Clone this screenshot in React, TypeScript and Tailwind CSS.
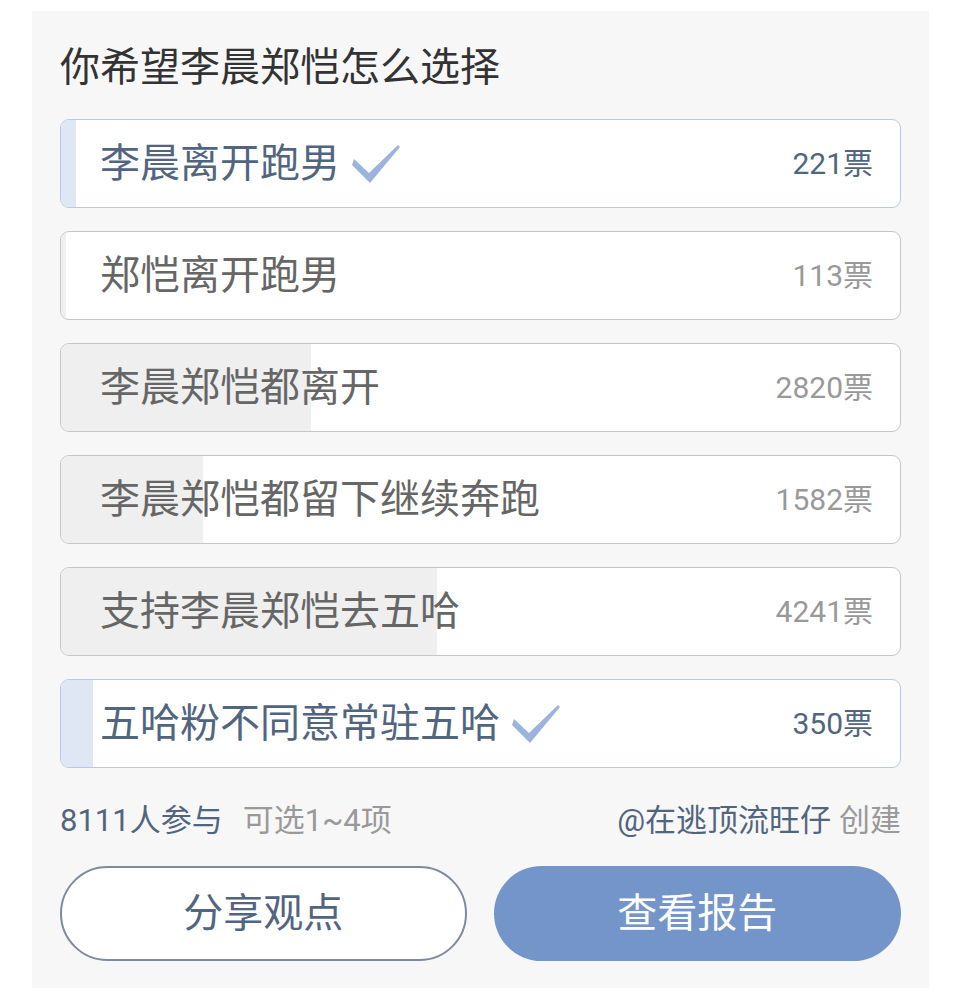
import React from "react";

type Opt = { text: string; votes: number; pct: number; selected: boolean };

const options: Opt[] = [
  { text: "李晨离开跑男", votes: 221, pct: 1.8, selected: true },
  { text: "郑恺离开跑男", votes: 113, pct: 0.6, selected: false },
  { text: "李晨郑恺都离开", votes: 2820, pct: 29.8, selected: false },
  { text: "李晨郑恺都留下继续奔跑", votes: 1582, pct: 16.9, selected: false },
  { text: "支持李晨郑恺去五哈", votes: 4241, pct: 44.8, selected: false },
  { text: "五哈粉不同意常驻五哈", votes: 350, pct: 3.8, selected: true },
];

function Check() {
  return (
    <svg width="48" height="40" viewBox="0 0 48 40" className="ml-[12px] shrink-0">
      <path d="M2 15 L17 29 L46 1 L48 3 L18 39 L0 21 Z" fill="#9bb3dd" />
    </svg>
  );
}

export default function App() {
  return (
    <div
      className="bg-white min-h-[992px] pt-[11px]"
      style={{ fontFamily: 'Roboto, "Noto Sans CJK SC", sans-serif' }}
    >
      <div className="ml-[32px] w-[897px] h-[977px] bg-[#f7f7f7] px-[28px] pt-[37px]">
        <div className="text-[40px] leading-[40px] text-[#333333] mb-[31px]">
          你希望李晨郑恺怎么选择
        </div>
        <div className="flex flex-col gap-[23px]">
          {options.map((o, i) => (
            <div
              key={i}
              className={
                "relative h-[89px] rounded-[9px] border overflow-hidden bg-white " +
                (o.selected ? "border-[#b9c9e3]" : "border-[#c6c6c6]")
              }
            >
              <div
                className={
                  "absolute inset-y-0 left-0 " +
                  (o.selected ? "bg-[#dfe7f4]" : "bg-[#efefef]")
                }
                style={{ width: `${o.pct}%` }}
              />
              <div className="relative h-full flex items-center pl-[39px] pr-[27px]">
                <span
                  className={
                    "text-[40px] leading-none whitespace-nowrap " +
                    (o.selected ? "text-[#52657f]" : "text-[#666666]")
                  }
                >
                  {o.text}
                </span>
                {o.selected && <Check />}
                <span
                  className={
                    "ml-auto text-[30px] leading-none " +
                    (o.selected ? "text-[#52657f]" : "text-[#999999]")
                  }
                >
                  {o.votes}票
                </span>
              </div>
            </div>
          ))}
        </div>
        <div className="mt-[34px] h-[36px] flex items-center text-[31px] leading-none">
          <span className="text-[#52657f]">8111人参与</span>
          <span className="ml-[20px] text-[#999999]">可选1~4项</span>
          <span className="ml-auto text-[#52657f]">@在逃顶流旺仔</span>
          <span className="ml-[8px] text-[#999999]">创建</span>
        </div>
        <div className="mt-[28px] flex gap-[27px]">
          <button className="w-[407px] h-[95px] rounded-full border-[2px] border-[#7f8a9d] bg-white text-[40px] text-[#52657f] flex items-center justify-center">
            分享观点
          </button>
          <button className="w-[408px] h-[95px] rounded-full bg-[#7395c9] text-[40px] text-white flex items-center justify-center">
            查看报告
          </button>
        </div>
      </div>
    </div>
  );
}
